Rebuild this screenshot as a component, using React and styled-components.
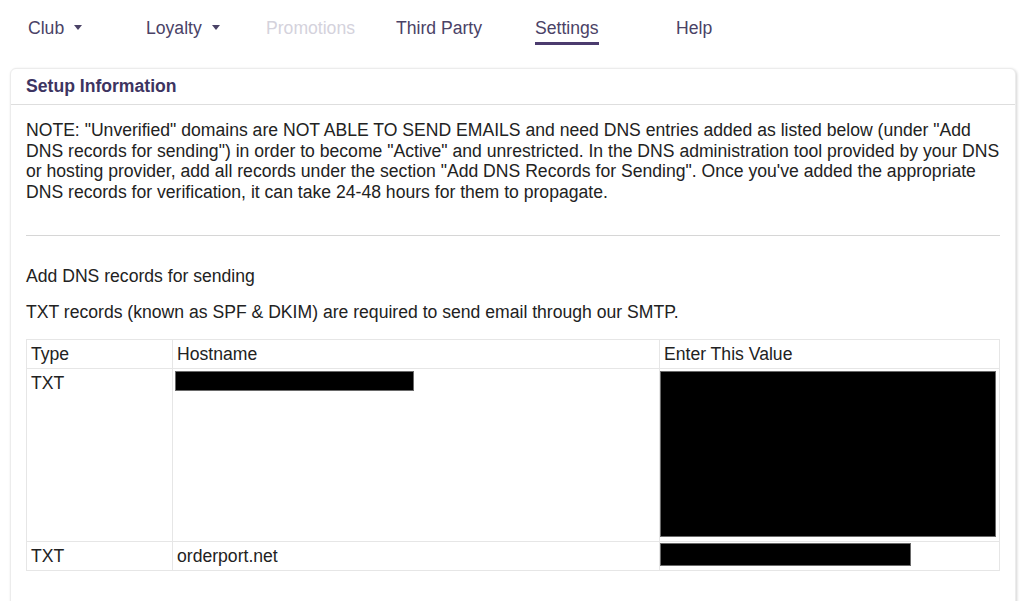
import React from "react";
import styled, { createGlobalStyle } from "styled-components";

const GlobalStyle = createGlobalStyle`
  body {
    margin: 0;
    background: #fff;
    font-family: "Liberation Sans", Arial, sans-serif;
    font-size: 17.6px;
    color: #222;
  }
`;

const Page = styled.div`
  padding: 0 8px 0 10px;
`;

const Nav = styled.nav`
  display: flex;
  height: 68px;
  padding-left: 18px;
`;

const NavItem = styled.div`
  width: ${(p) => p.width}px;
  padding-top: 18px;
  line-height: 20px;
  color: ${(p) => (p.disabled ? "#d4d2dc" : "#4a4266")};
  display: flex;
  flex-direction: column;
  align-items: flex-start;
`;

const Label = styled.span`
  display: inline-flex;
  align-items: center;
`;

const Caret = styled.span`
  display: inline-block;
  margin-left: 10px;
  border-top: 5px solid #4a4266;
  border-left: 4.5px solid transparent;
  border-right: 4.5px solid transparent;
  margin-bottom: 1px;
`;

const Underline = styled.span`
  display: block;
  margin-top: 4px;
  height: 3px;
  width: 64px;
  background: #4b3b6e;
`;

const Card = styled.section`
  border: 1px solid #ececec;
  border-radius: 6px;
  box-shadow: 1px 1px 3px rgba(0, 0, 0, 0.18);
  background: #fff;
`;

const CardHeader = styled.header`
  height: 35px;
  display: flex;
  align-items: center;
  padding: 0 15px;
  border-bottom: 1px solid #dedede;
  font-weight: bold;
  color: #3d3461;
`;

const CardBody = styled.div`
  padding: 15px 15px 40px;
`;

const Note = styled.p`
  margin: 0;
  line-height: 20.7px;
`;

const Divider = styled.hr`
  border: 0;
  border-top: 1px solid #d6d6d6;
  margin: 32px 0 30px;
`;

const Line = styled.p`
  margin: 0 0 ${(p) => p.gap}px;
  line-height: 20px;
`;

const Table = styled.table`
  width: 100%;
  border-collapse: collapse;
  table-layout: fixed;
  border: 1px solid #e6e6e6;
`;

const Cell = styled.td`
  border: 1px solid #e6e6e6;
  padding: 4px;
  line-height: 20px;
  vertical-align: top;
  text-align: left;
  font-weight: normal;
`;

const Head = styled(Cell).attrs({ as: "th" })``;

// redaction blocks over the secret values
const Redacted = styled.span`
  display: block;
  width: ${(p) => p.w}px;
  height: ${(p) => p.h}px;
  margin: -${(p) => p.dy}px 0 0 -${(p) => p.dx}px;
  background: #000;
  border: 1px solid #6a6a6a;
  box-sizing: border-box;
`;

const navItems = [
  { label: "Club", width: 118, caret: true },
  { label: "Loyalty", width: 120, caret: true },
  { label: "Promotions", width: 130, disabled: true },
  { label: "Third Party", width: 139 },
  { label: "Settings", width: 141, active: true },
  { label: "Help", width: 80 },
];

export default function App() {
  return (
    <Page>
      <GlobalStyle />
      <Nav>
        {navItems.map((item) => (
          <NavItem key={item.label} width={item.width} disabled={item.disabled}>
            <Label>
              {item.label}
              {item.caret && <Caret />}
            </Label>
            {item.active && <Underline />}
          </NavItem>
        ))}
      </Nav>
      <Card>
        <CardHeader>Setup Information</CardHeader>
        <CardBody>
          <Note>
            NOTE: "Unverified" domains are NOT ABLE TO SEND EMAILS and need DNS entries added as listed below (under "Add
            DNS records for sending") in order to become "Active" and unrestricted. In the DNS administration tool provided by your DNS
            or hosting provider, add all records under the section "Add DNS Records for Sending". Once you've added the appropriate
            DNS records for verification, it can take 24-48 hours for them to propagate.
          </Note>
          <Divider />
          <Line gap={16}>Add DNS records for sending</Line>
          <Line gap={17}>TXT records (known as SPF &amp; DKIM) are required to send email through our SMTP.</Line>
          <Table>
            <colgroup>
              <col style={{ width: 146 }} />
              <col style={{ width: 487 }} />
              <col />
            </colgroup>
            <thead>
              <tr>
                <Head>Type</Head>
                <Head>Hostname</Head>
                <Head>Enter This Value</Head>
              </tr>
            </thead>
            <tbody>
              <tr>
                <Cell>TXT</Cell>
                <Cell>
                  <Redacted w={239} h={20} dx={2} dy={2} />
                </Cell>
                <Cell>
                  <Redacted w={336} h={166} dx={4} dy={2} />
                </Cell>
              </tr>
              <tr>
                <Cell>TXT</Cell>
                <Cell>orderport.net</Cell>
                <Cell>
                  <Redacted w={251} h={23} dx={4} dy={3} />
                </Cell>
              </tr>
            </tbody>
          </Table>
        </CardBody>
      </Card>
    </Page>
  );
}
